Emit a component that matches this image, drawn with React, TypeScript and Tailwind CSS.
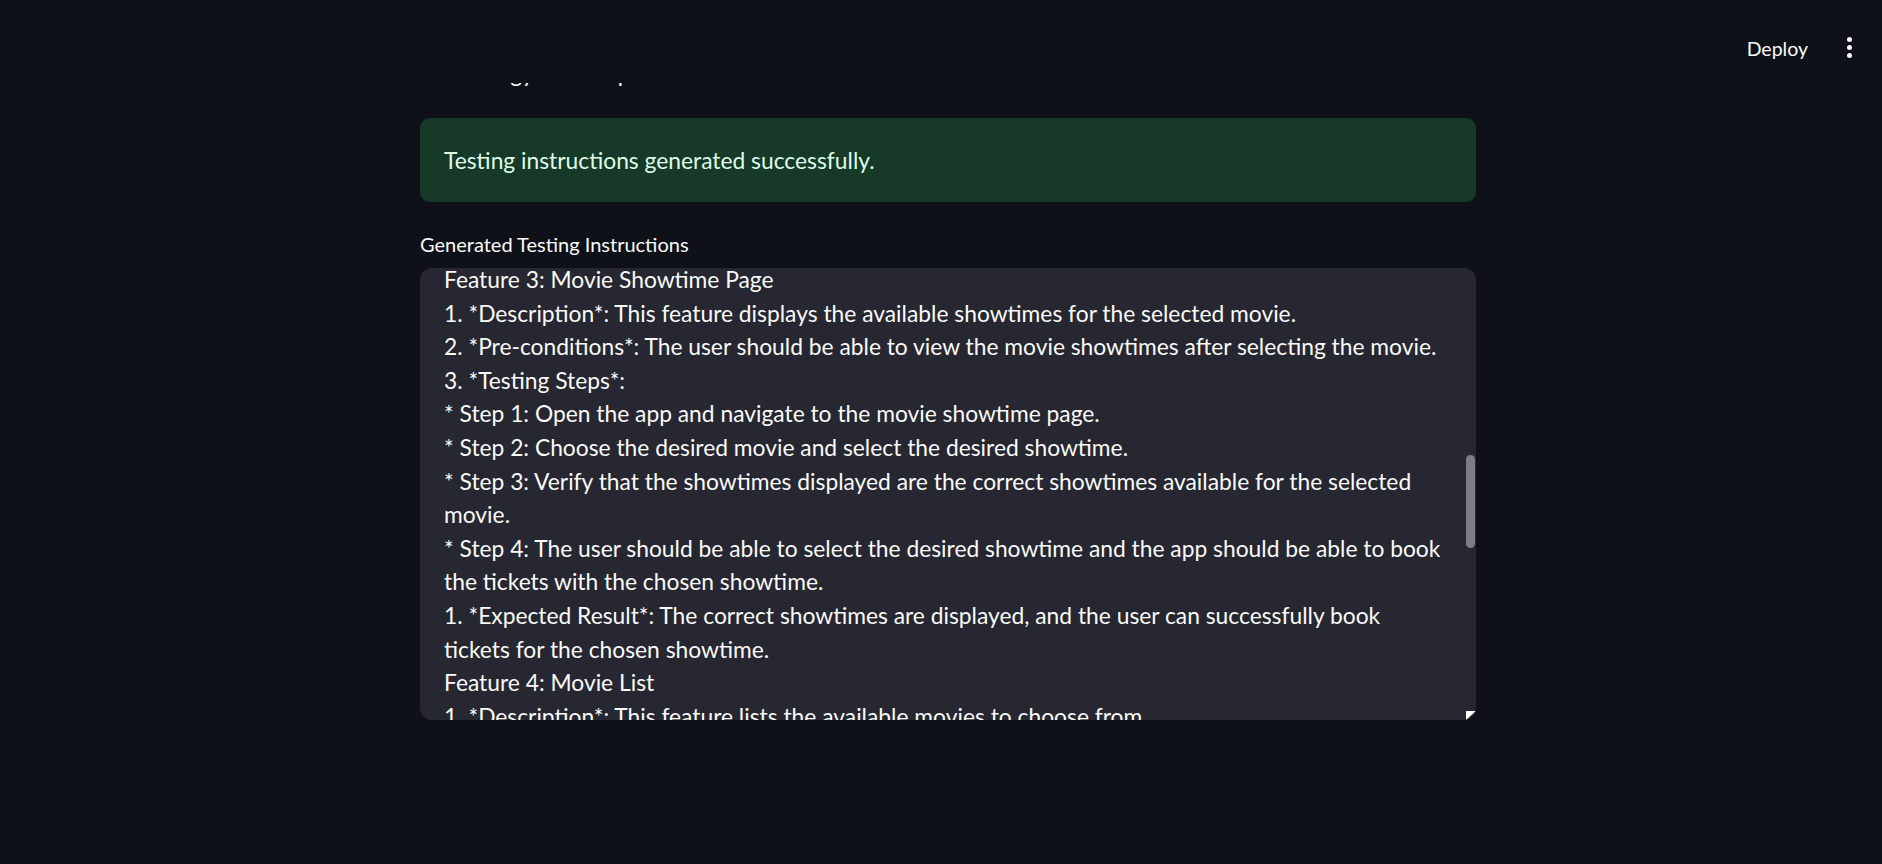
const FONT = "font-['Lato','Noto_Sans',sans-serif]";

const LINES = [
  "Feature 3: Movie Showtime Page",
  "1. *Description*: This feature displays the available showtimes for the selected movie.",
  "2. *Pre-conditions*: The user should be able to view the movie showtimes after selecting the movie.",
  "3. *Testing Steps*:",
  "* Step 1: Open the app and navigate to the movie showtime page.",
  "* Step 2: Choose the desired movie and select the desired showtime.",
  "* Step 3: Verify that the showtimes displayed are the correct showtimes available for the selected",
  "movie.",
  "* Step 4: The user should be able to select the desired showtime and the app should be able to book",
  "the tickets with the chosen showtime.",
  "1. *Expected Result*: The correct showtimes are displayed, and the user can successfully book",
  "tickets for the chosen showtime.",
  "Feature 4: Movie List",
  "1. *Description*: This feature lists the available movies to choose from.",
];

function Header() {
  return (
    <div className="absolute left-0 top-0 z-10 flex h-[83px] w-full items-start justify-end bg-[#0e1117] pr-[30px] pt-[35px]">
      <span className={`${FONT} mr-[39px] text-[19.5px] leading-[28px] text-[#fafafa]`}>Deploy</span>
      <div className="mt-[2px] flex flex-col items-center gap-[3px]">
        <span className="h-[5px] w-[5px] rounded-full bg-[#fafafa]" />
        <span className="h-[5px] w-[5px] rounded-full bg-[#fafafa]" />
        <span className="h-[5px] w-[5px] rounded-full bg-[#fafafa]" />
      </div>
    </div>
  );
}

function ResizeGrip() {
  return (
    <svg className="absolute bottom-0 right-0" width="10" height="9" viewBox="0 0 10 9">
      <polygon points="0,0 10,0 0,9" fill="#ffffff" />
      <line x1="10" y1="3" x2="4" y2="9" stroke="#55565c" strokeWidth="1" />
      <line x1="10" y1="6" x2="7" y2="9" stroke="#55565c" strokeWidth="1" />
    </svg>
  );
}

export default function App() {
  return (
    <div className={`${FONT} relative min-h-screen overflow-hidden bg-[#0e1117] text-[#fafafa]`}>
      <Header />
      <div className="ml-[420px] w-[1056px] pt-[54px]">
        <div className="h-[38px] whitespace-nowrap text-[22.8px] leading-[38px]">Technology Stack Input</div>

        <div className="mt-[26px] rounded-[10px] bg-[#173928] px-[24px] py-[23px] text-[22.8px] leading-[38px] text-[#dffde9]">
          Testing instructions generated successfully.
        </div>

        <div className="mt-[27px] h-[30px] text-[20px] leading-[30px]">Generated Testing Instructions</div>

        <div className="relative mt-[9px] h-[452px] overflow-hidden rounded-[12px] bg-[#262730]">
          <div className="-mt-[5px] pl-[24px] text-[22.8px] leading-[33.6px]">
            {LINES.map((l, i) => (
              <div key={i} className="whitespace-nowrap">
                {l}
              </div>
            ))}
          </div>
          <div className="absolute right-[1px] top-[187px] h-[93px] w-[9px] rounded-full bg-[#7d7e85]" />
          <ResizeGrip />
        </div>
      </div>
    </div>
  );
}
